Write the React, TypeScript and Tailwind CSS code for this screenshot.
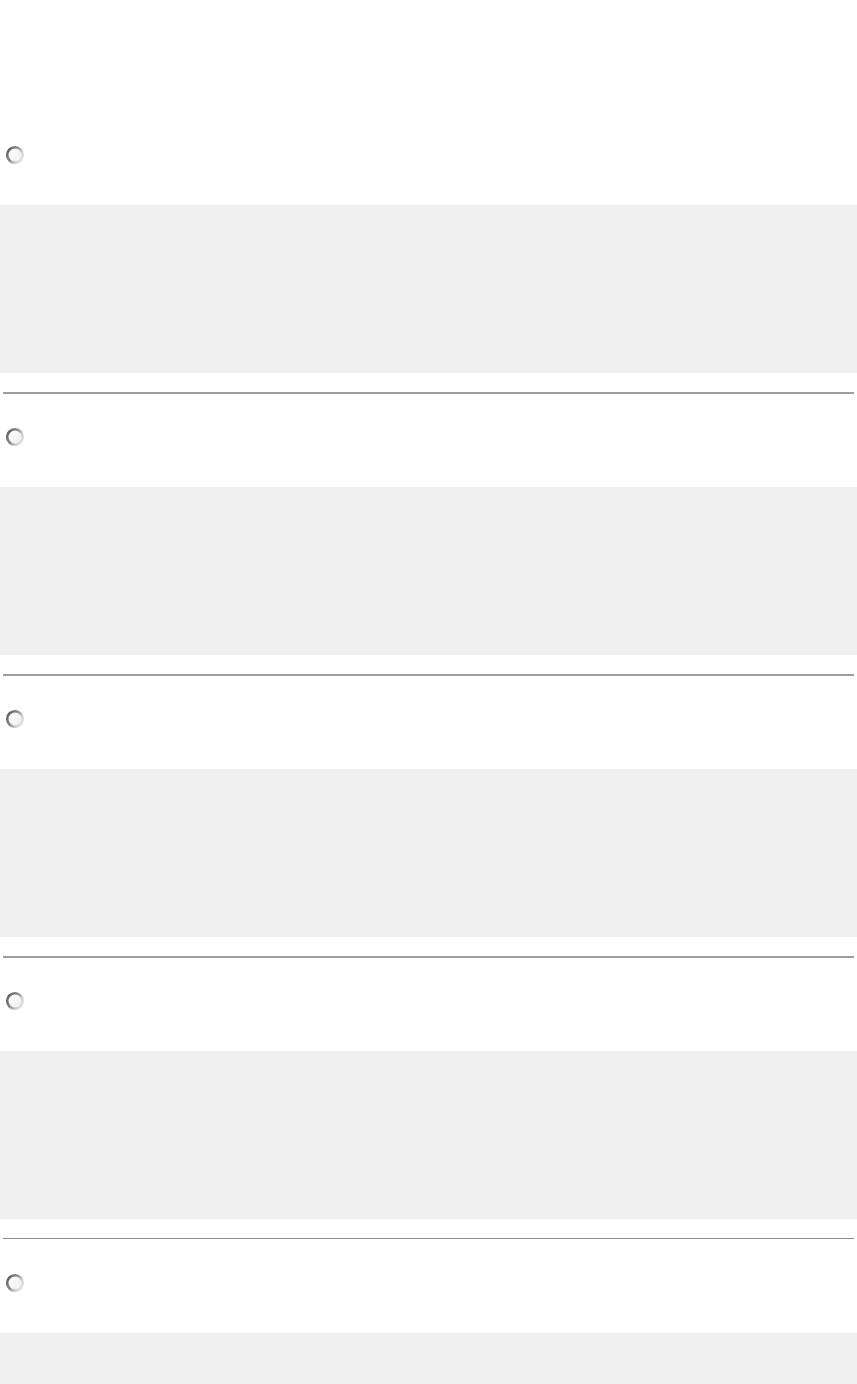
import React from "react";

function Radio() {
  return (
    <svg width="20" height="20" viewBox="0 0 20 20" className="block">
      <defs>
        <linearGradient id="rg" x1="0" y1="0.2" x2="1" y2="0.8">
          <stop offset="0" stopColor="#5e5e5e" />
          <stop offset="0.4" stopColor="#8a8a8a" />
          <stop offset="0.75" stopColor="#cfcfcf" />
          <stop offset="1" stopColor="#e6e6e6" />
        </linearGradient>
        <linearGradient id="rf" x1="0" y1="0" x2="1" y2="1">
          <stop offset="0" stopColor="#ffffff" />
          <stop offset="1" stopColor="#ededed" />
        </linearGradient>
      </defs>
      <circle cx="10" cy="10" r="7.8" fill="url(#rf)" stroke="url(#rg)" strokeWidth="2.6" />
    </svg>
  );
}

export default function App() {
  const items = [0, 1, 2, 3, 4];
  return (
    <div className="w-[857px] h-[1384px] overflow-hidden bg-white pt-[145px]">
      {items.map((i) => (
        <div key={i} className="flex flex-col">
          <div className="h-[20px] pl-[5px]">
            <Radio />
          </div>
          <div className="mt-[40px] h-[168px] w-full bg-[#f0f0f0]" />
          {i < 4 && (
            <>
              <div
                className={
                  i === 3
                    ? "mt-[19px] mx-[3px] h-[1px] bg-[#8e8e8e]"
                    : "mt-[19px] mx-[3px] h-[2px] bg-[#9e9e9e]"
                }
              />
              <div className={i === 3 ? "h-[34px]" : "h-[33px]"} />
            </>
          )}
        </div>
      ))}
    </div>
  );
}
